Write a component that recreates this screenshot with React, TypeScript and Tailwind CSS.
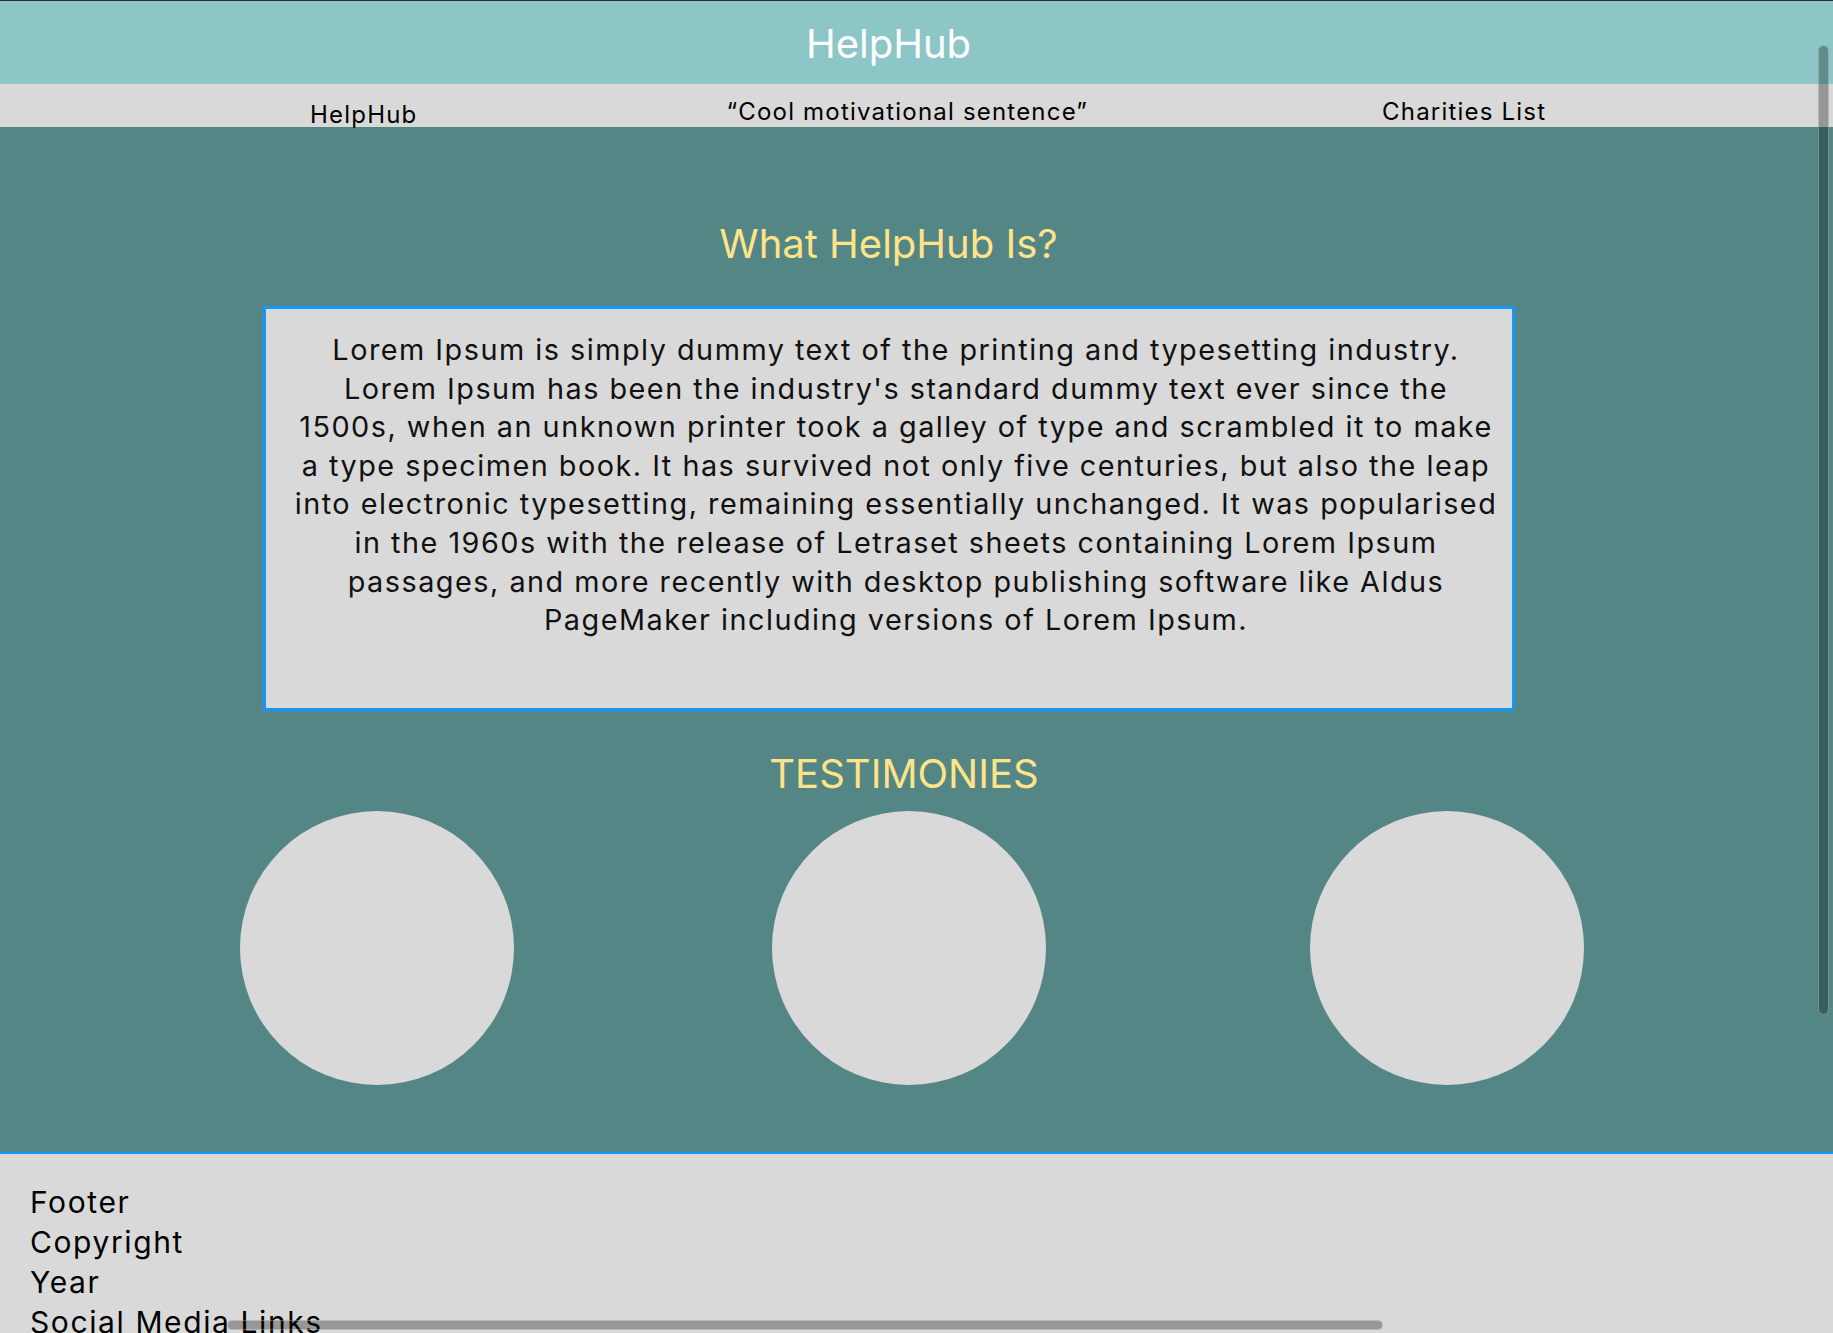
const lorem =
    "Lorem Ipsum is simply dummy text of the printing and typesetting industry. Lorem Ipsum has been the industry's standard dummy text ever since the 1500s, when an unknown printer took a galley of type and scrambled it to make a type specimen book. It has survived not only five centuries, but also the leap into electronic typesetting, remaining essentially unchanged. It was popularised in the 1960s with the release of Letraset sheets containing Lorem Ipsum passages, and more recently with desktop publishing software like Aldus PageMaker including versions of Lorem Ipsum.";

export default function App() {
    return (
        <div
            className="relative h-screen overflow-hidden border-t border-[#2e2e2e] bg-[#d9d9d9] text-black"
            style={{ fontFamily: 'Inter, "Liberation Sans", sans-serif' }}
        >
            {/* Title bar */}
            <header className="flex h-[83px] items-center justify-center bg-[#8cc6c7] pt-[2px] pr-[56px] text-[40px] text-white">
                HelpHub
            </header>

            {/* Nav strip */}
            <nav className="flex h-[43px] items-start bg-[#d9d9d9] pt-[13px] text-[24px] leading-[29px] tracking-[1.2px] whitespace-nowrap">
                <span className="ml-[310px] mt-[3px]">HelpHub</span>
                <span className="ml-[309px]">“Cool motivational sentence”</span>
                <span className="ml-[294px]">Charities List</span>
            </nav>

            {/* Main */}
            <main className="flex flex-col bg-[#548686] pt-[94px] pb-[67px]">
                <h2 className="pr-[56px] text-center text-[40px] leading-[46px] text-[#ffe388]">What HelpHub Is?</h2>

                <div className="mt-[39px] ml-[263px] h-[405px] w-[1252px] border-[3px] border-[#1597ff] bg-[#d9d9d9] pt-[22px] pr-[12px] pl-[26px]">
                    <p className="text-center text-[28.8px] leading-[38.6px] tracking-[1.5px] text-[#111]">{lorem}</p>
                </div>

                <h2 className="mt-[40px] pr-[25px] text-center text-[40px] leading-[46px] text-[#ffe388]">TESTIMONIES</h2>

                <div className="mt-[14px] flex">
                    <div className="ml-[240px] h-[274px] w-[274px] rounded-full bg-[#d9d9d9]" />
                    <div className="ml-[258px] h-[274px] w-[274px] rounded-full bg-[#d9d9d9]" />
                    <div className="ml-[264px] h-[274px] w-[274px] rounded-full bg-[#d9d9d9]" />
                </div>
            </main>

            {/* Footer */}
            <footer className="border-t-2 border-[#1597ff] bg-[#d9d9d9] pt-[28px] pl-[30px] text-[30px] leading-[40px] tracking-[1.6px]">
                <div>Footer</div>
                <div>Copyright</div>
                <div>Year</div>
                <div>Social Media Links</div>
            </footer>

            {/* Overlay scrollbars */}
            <div className="absolute top-[44px] left-[1818px] h-[970px] w-[11px] rounded-full border border-white/30 bg-black/30" />
            <div className="absolute top-[1319px] left-[227px] h-[10px] w-[1156px] rounded-full border border-white/30 bg-black/30" />
        </div>
    );
}
